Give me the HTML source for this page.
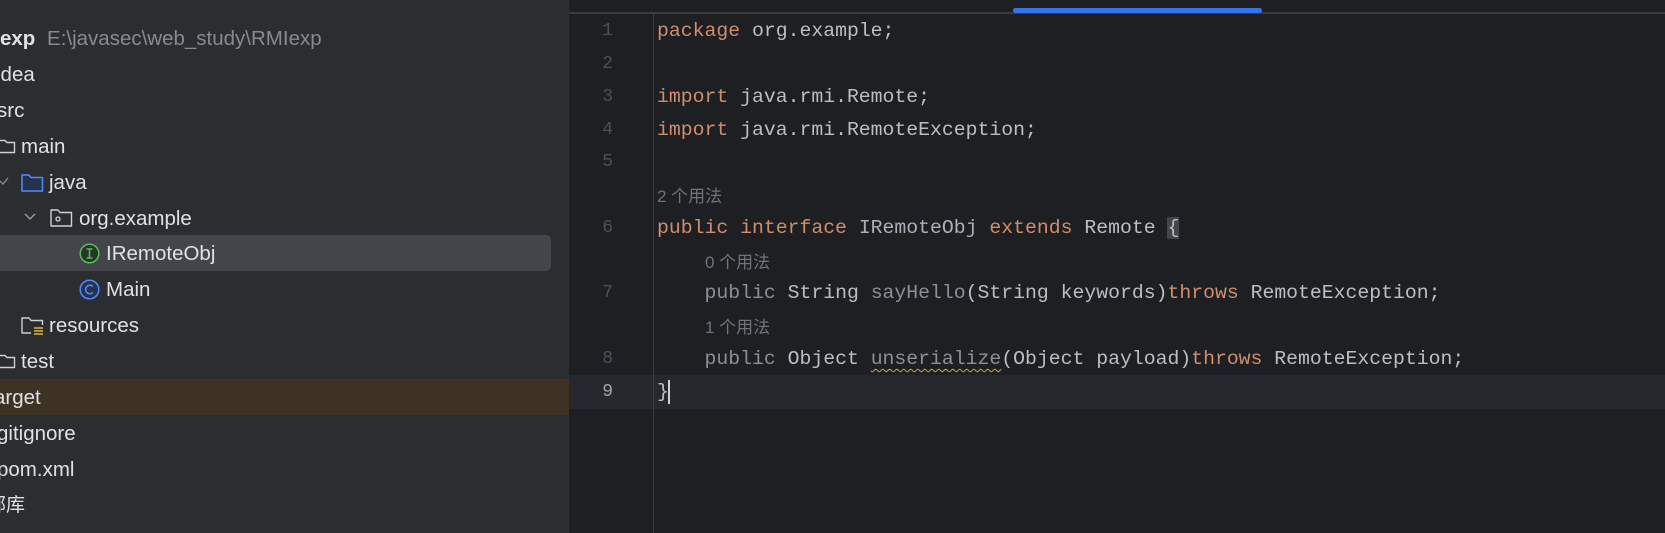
<!DOCTYPE html>
<html><head><meta charset="utf-8"><style>
*{margin:0;padding:0;box-sizing:border-box}
body{width:1665px;height:533px;overflow:hidden;background:#1e1f22;position:relative;font-family:"Liberation Sans","Noto Sans CJK SC",sans-serif}
#left{position:absolute;left:0;top:0;width:569px;height:533px;background:#2b2d30;color:#dfe1e5;font-size:20.5px}
.r{position:absolute;height:36px;line-height:36px;white-space:nowrap}
.sel{position:absolute;left:0;top:235px;width:551px;height:36px;background:#43454a;border-radius:0 5px 5px 0}
.tgt{position:absolute;left:0;top:379px;width:569px;height:36px;background:#3d3223}
#ed{position:absolute;left:569px;top:0;width:1096px;height:533px;background:#1e1f22}
.topl{position:absolute;left:0;top:12px;width:1096px;height:1.5px;background:#393b40}
.blue{position:absolute;left:444px;top:8px;width:249px;height:5px;background:#3574f0;border-radius:3px}
.gut{position:absolute;left:84px;top:13px;width:1px;height:520px;background:#393b40}
.cur{position:absolute;left:0;top:375px;width:1096px;height:34px;background:#26282e}
.ln{position:absolute;left:0;width:44px;text-align:right;font-family:"Liberation Mono",monospace;font-size:18px;color:#4b5059;height:33px;line-height:33px}
.c{position:absolute;left:88px;white-space:pre;font-family:"Liberation Mono",monospace;font-size:19.8px;color:#bcbec4;height:33px;line-height:33px}
.h{position:absolute;white-space:pre;font-family:"Liberation Sans","Noto Sans CJK SC",sans-serif;font-size:17px;color:#6f737a;height:33px;line-height:33px}
.k{color:#cf8e6d}.g{color:#8c8f96}.i{color:#a9b0bb}
.sq{text-decoration:underline wavy #c9a33a;text-decoration-thickness:1px;text-underline-offset:4px}
.br{background:#43454a}
</style></head><body>
<div id="left">
<div class="sel"></div><div class="tgt"></div>
<div class="r" style="top:21px;left:0"><b>exp</b> <span style="color:#868a91;margin-left:6px">E:\javasec\web_study\RMIexp</span></div>
<div class="r" style="top:57px;left:-4px">idea</div>
<div class="r" style="top:93px;left:-3px">src</div>
<svg style="position:absolute;left:0;top:138px" width="16" height="16"><path d="M-3 2.5H5l2 2h7.5v10H-3z" fill="none" stroke="#ced0d6" stroke-width="1.4"/></svg>
<div class="r" style="top:129px;left:21px">main</div>
<svg style="position:absolute;left:0;top:176px" width="10" height="10"><path d="M0 5l3 3 5-6" fill="none" stroke="#8c8f96" stroke-width="1.3"/></svg>
<svg style="position:absolute;left:21px;top:173px" width="23" height="19"><path d="M1 2h7l2 2.5h11.5v13.5H1z" fill="#25324d" stroke="#548af7" stroke-width="1.5" stroke-linejoin="round"/></svg>
<div class="r" style="top:165px;left:49px">java</div>
<svg style="position:absolute;left:24px;top:212px" width="12" height="10"><path d="M1 2l5 5 5-5" fill="none" stroke="#a0a3a9" stroke-width="1.3"/></svg>
<svg style="position:absolute;left:50px;top:208px" width="23" height="19"><path d="M1 2h7l2 2.5h11.5v13.5H1z" fill="none" stroke="#ced0d6" stroke-width="1.4" stroke-linejoin="round"/><circle cx="8" cy="11" r="2" fill="none" stroke="#ced0d6" stroke-width="1.3"/></svg>
<div class="r" style="top:201px;left:79px">org.example</div>
<svg style="position:absolute;left:79px;top:243px" width="21" height="21"><circle cx="10.5" cy="10.5" r="9.3" fill="#253627" stroke="#5fb865" stroke-width="1.5"/><path d="M7.5 6h6M7.5 15h6M10.5 6v9" stroke="#5fb865" stroke-width="1.5"/></svg>
<div class="r" style="top:236px;left:106px">IRemoteObj</div>
<svg style="position:absolute;left:79px;top:279px" width="21" height="21"><circle cx="10.5" cy="10.5" r="9.3" fill="#25324d" stroke="#548af7" stroke-width="1.5"/><path d="M14 7.5a4.3 4.3 0 1 0 0 6" fill="none" stroke="#548af7" stroke-width="1.6"/></svg>
<div class="r" style="top:272px;left:106px">Main</div>
<svg style="position:absolute;left:21px;top:316px" width="24" height="20"><path d="M10 17H1V2h7l2 2.5h11.5V9" fill="none" stroke="#ced0d6" stroke-width="1.4" stroke-linejoin="round"/><path d="M13 12h9M13 15h9M13 18h9" stroke="#e3b341" stroke-width="1.5"/></svg>
<div class="r" style="top:308px;left:49px">resources</div>
<svg style="position:absolute;left:0;top:353px" width="16" height="16"><path d="M-3 2.5H5l2 2h7.5v10H-3z" fill="none" stroke="#ced0d6" stroke-width="1.4"/></svg>
<div class="r" style="top:344px;left:21px">test</div>
<div class="r" style="top:380px;left:-6px">arget</div>
<div class="r" style="top:416px;left:-3px">gitignore</div>
<div class="r" style="top:452px;left:-3px">pom.xml</div>
<div class="r" style="top:488px;left:-13px;font-size:19px">部库</div>
</div>
<div id="ed">
<div class="topl"></div><div class="blue"></div>
<div class="cur"></div>
<div class="gut"></div>
<div class="ln" style="top:15px">1</div>
<div class="ln" style="top:48px">2</div>
<div class="ln" style="top:81px">3</div>
<div class="ln" style="top:114px">4</div>
<div class="ln" style="top:146px">5</div>
<div class="ln" style="top:212px">6</div>
<div class="ln" style="top:277px">7</div>
<div class="ln" style="top:343px">8</div>
<div class="ln" style="top:376px;color:#a1a3ab">9</div>
<div class="c" style="top:15px"><span class="k">package</span> org.example;</div>
<div class="c" style="top:81px"><span class="k">import</span> java.rmi.Remote;</div>
<div class="c" style="top:114px"><span class="k">import</span> java.rmi.RemoteException;</div>
<div class="h" style="top:180px;left:88px">2 个用法</div>
<div class="c" style="top:212px"><span class="k">public interface</span> <span class="i">IRemoteObj</span> <span class="k">extends</span> Remote <span class="br">{</span></div>
<div class="h" style="top:246px;left:136px">0 个用法</div>
<div class="c" style="top:277px">    <span class="g">public</span> String <span class="g">sayHello</span>(String keywords)<span class="k">throws</span> RemoteException;</div>
<div class="h" style="top:311px;left:136px">1 个用法</div>
<div class="c" style="top:343px">    <span class="g">public</span> Object <span class="g sq">unserialize</span>(Object payload)<span class="k">throws</span> RemoteException;</div>
<div class="c" style="top:376px">}<span style="display:inline-block;width:2px;height:24px;background:#ced0d6;vertical-align:middle;margin-left:-1px"></span></div>
</div>
</body></html>
